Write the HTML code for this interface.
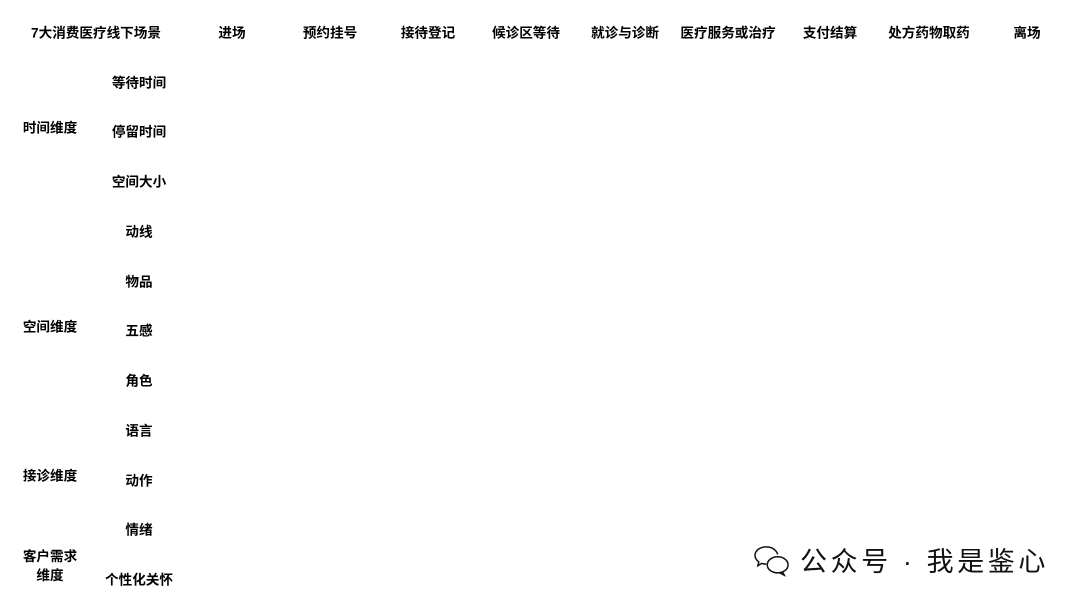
<!DOCTYPE html>
<html><head><meta charset="utf-8"><style>
body{margin:0;width:1080px;height:605px;background:#fff;position:relative;overflow:hidden;font-family:"Liberation Sans","Noto Sans CJK SC",sans-serif;}
.t{position:absolute;font-size:13.6px;font-weight:bold;color:#000;transform:translate(-50%,-50%);white-space:nowrap;line-height:15px;text-align:center}
.w{position:absolute;left:800px;top:546px;font-size:27px;letter-spacing:3.6px;color:#111;white-space:nowrap;line-height:32px}
</style></head><body>
<div class="t" style="left:96px;top:33px">7大消费医疗线下场景</div>
<div class="t" style="left:232px;top:33px">进场</div>
<div class="t" style="left:330px;top:33px">预约挂号</div>
<div class="t" style="left:428px;top:33px">接待登记</div>
<div class="t" style="left:526px;top:33px">候诊区等待</div>
<div class="t" style="left:625px;top:33px">就诊与诊断</div>
<div class="t" style="left:728px;top:33px">医疗服务或治疗</div>
<div class="t" style="left:830px;top:33px">支付结算</div>
<div class="t" style="left:929px;top:33px">处方药物取药</div>
<div class="t" style="left:1027px;top:33px">离场</div>
<div class="t" style="left:139px;top:83px">等待时间</div>
<div class="t" style="left:139px;top:132px">停留时间</div>
<div class="t" style="left:139px;top:182px">空间大小</div>
<div class="t" style="left:139px;top:232px">动线</div>
<div class="t" style="left:139px;top:282px">物品</div>
<div class="t" style="left:139px;top:331px">五感</div>
<div class="t" style="left:139px;top:381px">角色</div>
<div class="t" style="left:139px;top:431px">语言</div>
<div class="t" style="left:139px;top:481px">动作</div>
<div class="t" style="left:139px;top:530px">情绪</div>
<div class="t" style="left:139px;top:580px">个性化关怀</div>
<div class="t" style="left:50px;top:128px">时间维度</div>
<div class="t" style="left:50px;top:327px">空间维度</div>
<div class="t" style="left:50px;top:476px">接诊维度</div>
<div class="t" style="left:50px;top:566px;line-height:19px">客户需求<br>维度</div>
<svg style="position:absolute;left:752px;top:545px" width="40" height="34" viewBox="0 0 40 36" fill="none" stroke="#111" stroke-width="1.6">
<path d="M14 2C7 2 2 6 2 11c0 3 1.5 5 4 7l-1 4 4-2.5c1.5.5 3 .7 5 .7"/>
<path d="M14 2c6 0 11 3.5 12 8"/>
<ellipse cx="26" cy="21" rx="11" ry="8.5"/>
<path d="M31 28l2 4-5-2.5"/>
</svg>
<div class="w">公众号 · 我是鉴心</div>
</body></html>
